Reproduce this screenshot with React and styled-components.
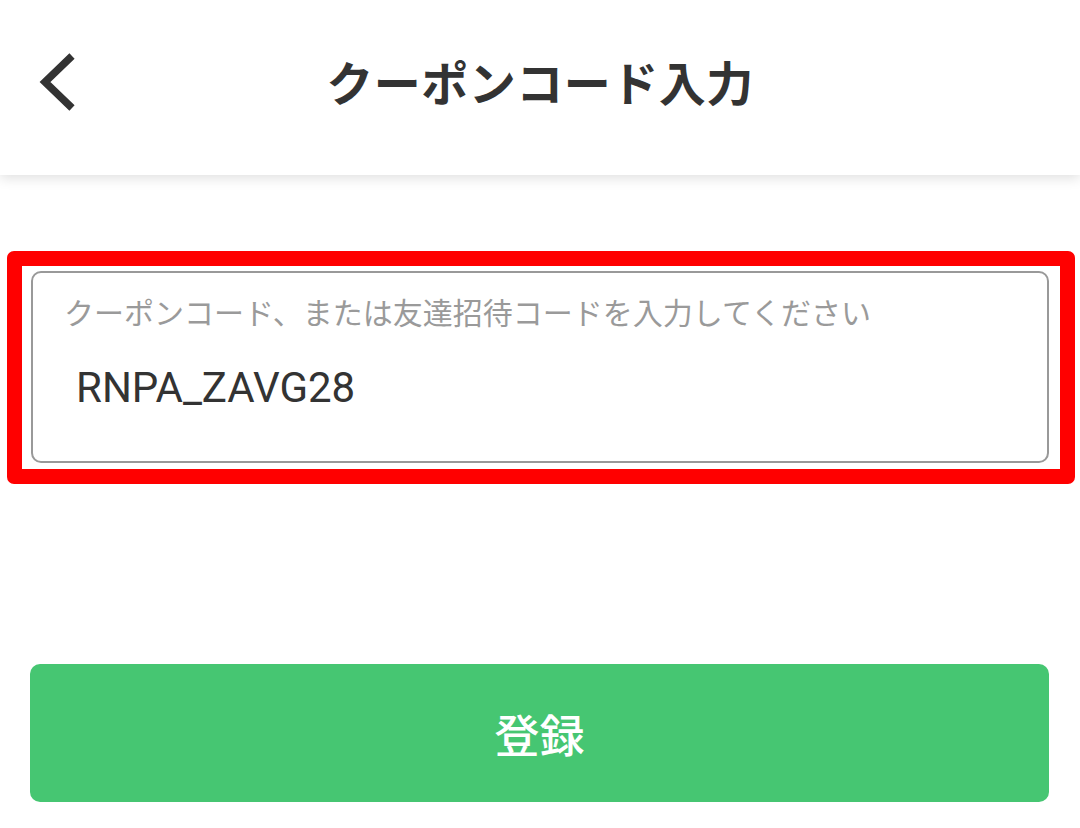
import React from "react";
import styled, { createGlobalStyle } from "styled-components";

const GlobalStyle = createGlobalStyle`
  html, body {
    margin: 0;
    padding: 0;
    background: #ffffff;
  }
  body {
    font-family: "Noto Sans CJK JP", "Noto Sans", Roboto, sans-serif;
    color: #333333;
  }
`;

export default function App() {
  return (
    <>
      <GlobalStyle />
      <Page>
        <Header>
          <BackButton aria-label="戻る">
            <svg width="40" height="60" viewBox="0 0 40 60">
              <polyline
                points="33,4 6,30 33,56"
                fill="none"
                stroke="#333333"
                strokeWidth="7.5"
              />
            </svg>
          </BackButton>
          <Title>クーポンコード入力</Title>
          <span />
        </Header>
        <Main>
          <Highlight>
            <Field>
              <FieldLabel>クーポンコード、または友達招待コードを入力してください</FieldLabel>
              <FieldValue>RNPA_ZAVG28</FieldValue>
            </Field>
          </Highlight>
          <SubmitButton>登録</SubmitButton>
        </Main>
      </Page>
    </>
  );
}

const Page = styled.div`
  width: 1080px;
  min-height: 828px;
  background: #ffffff;
  overflow: hidden;
`;

const Header = styled.header`
  height: 175px;
  padding-bottom: 14px;
  box-sizing: border-box;
  display: grid;
  grid-template-columns: 1fr auto 1fr;
  align-items: center;
  background: #ffffff;
  box-shadow: 0 3px 12px rgba(0, 0, 0, 0.13);
  position: relative;
  z-index: 1;
`;

const BackButton = styled.button`
  justify-self: start;
  margin-left: 39px;
  margin-top: 2px;
  padding: 0;
  border: none;
  background: none;
  display: flex;
`;

const Title = styled.h1`
  margin: 0;
  font-size: 47px;
  font-weight: 700;
  color: #333333;
  letter-spacing: 0.5px;
`;

const Main = styled.main`
  padding: 76px 0 0;
  display: flex;
  flex-direction: column;
`;

const Highlight = styled.div`
  margin: 0 5px 0 7px;
  border: 15px solid #ff0000;
  border-radius: 7px;
  padding: 5px 11px 6px 9px;
`;

const Field = styled.div`
  height: 188px;
  border: 2px solid #999999;
  border-radius: 10px;
  padding: 0 0 0 31px;
  display: flex;
  flex-direction: column;
  box-sizing: content-box;
`;

const FieldLabel = styled.div`
  margin-top: 16px;
  font-size: 30px;
  color: #9a9a9a;
`;

const FieldValue = styled.div`
  margin-top: 30px;
  margin-left: 12px;
  font-family: Roboto, "Noto Sans", sans-serif;
  font-size: 42px;
  color: #333333;
`;

const SubmitButton = styled.button`
  margin: 180px 31px 0 30px;
  height: 138px;
  border: none;
  border-radius: 10px;
  background: #46c672;
  color: #ffffff;
  font-family: "Noto Sans CJK JP", sans-serif;
  font-size: 45px;
  font-weight: 500;
  display: flex;
  align-items: center;
  justify-content: center;
`;
